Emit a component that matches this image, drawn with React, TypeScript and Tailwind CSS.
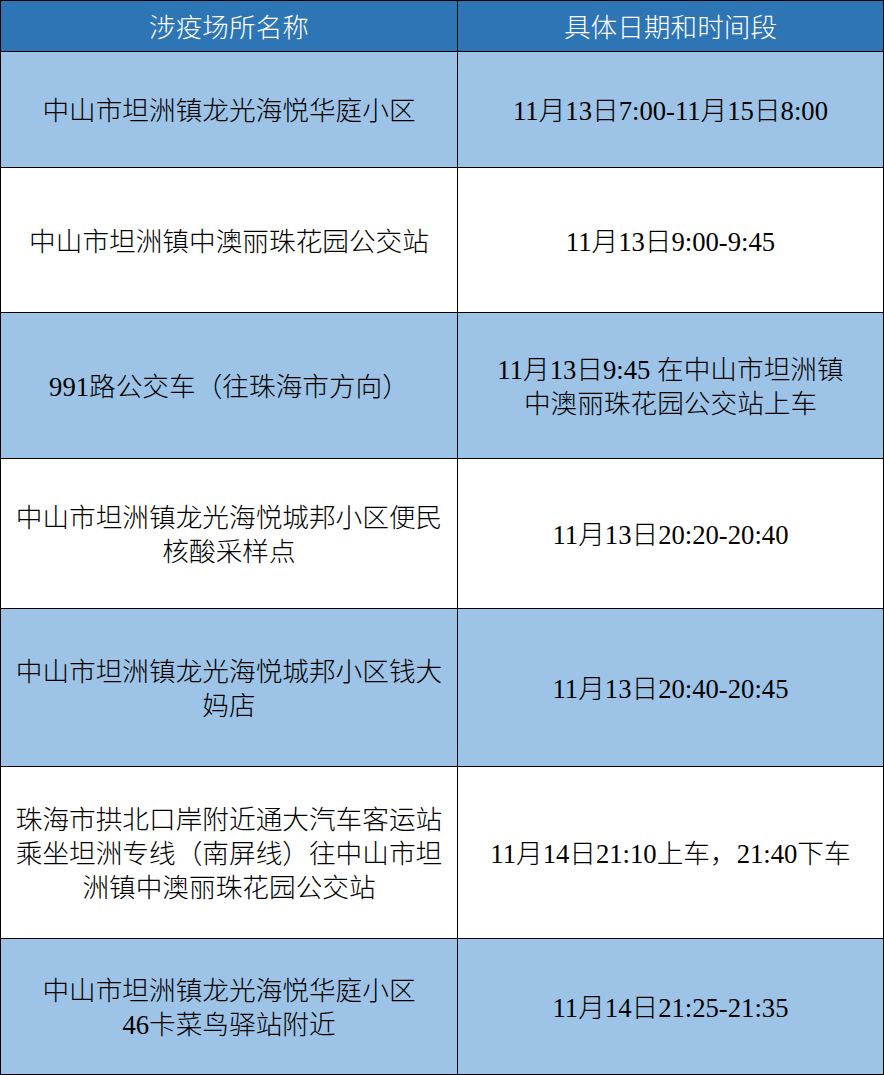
const rows: { place: string[]; time: string[]; h: string }[] = [
  { place: ["中山市坦洲镇龙光海悦华庭小区"], time: ["11月13日7:00-11月15日8:00"], h: "h-[116px]" },
  { place: ["中山市坦洲镇中澳丽珠花园公交站"], time: ["11月13日9:00-9:45"], h: "h-[145px]" },
  { place: ["991路公交车（往珠海市方向）"], time: ["11月13日9:45 在中山市坦洲镇", "中澳丽珠花园公交站上车"], h: "h-[146px]" },
  { place: ["中山市坦洲镇龙光海悦城邦小区便民", "核酸采样点"], time: ["11月13日20:20-20:40"], h: "h-[150px]" },
  { place: ["中山市坦洲镇龙光海悦城邦小区钱大", "妈店"], time: ["11月13日20:40-20:45"], h: "h-[158px]" },
  {
    place: ["珠海市拱北口岸附近通大汽车客运站", "乘坐坦洲专线（南屏线）往中山市坦", "洲镇中澳丽珠花园公交站"],
    time: ["11月14日21:10上车，21:40下车"],
    h: "h-[172px]",
  },
  { place: ["中山市坦洲镇龙光海悦华庭小区", "46卡菜鸟驿站附近"], time: ["11月14日21:25-21:35"], h: "h-[136px]" },
];

function Cell({ lines, bg, h, w }: { lines: string[]; bg: string; h: string; w: string }) {
  return (
    <div className={`${w} ${h} ${bg} border-r border-b border-black flex flex-col items-center justify-center text-center px-2 pt-[3px]`}>
      {lines.map((l, i) => (
        <div key={i} className="leading-[34px] whitespace-nowrap">
          {l}
        </div>
      ))}
    </div>
  );
}

export default function App() {
  return (
    <div
      className="w-[884px] bg-white text-black text-[26.67px] font-light"
      style={{ fontFamily: '"Liberation Serif", "Noto Sans CJK SC", serif' }}
    >
      <div className="border-t border-l border-black">
        <div className="flex text-white">
          <div className="w-[457px] h-[51px] bg-[#2e75b6] border-r border-b border-black flex items-center justify-center pt-[3px]">
            涉疫场所名称
          </div>
          <div className="w-[426px] h-[51px] bg-[#2e75b6] border-r border-b border-black flex items-center justify-center pt-[3px]">
            具体日期和时间段
          </div>
        </div>
        {rows.map((r, i) => {
          const bg = i % 2 === 0 ? "bg-[#9dc3e6]" : "bg-white";
          return (
            <div key={i} className="flex">
              <Cell lines={r.place} bg={bg} h={r.h} w="w-[457px]" />
              <Cell lines={r.time} bg={bg} h={r.h} w="w-[426px]" />
            </div>
          );
        })}
      </div>
    </div>
  );
}
